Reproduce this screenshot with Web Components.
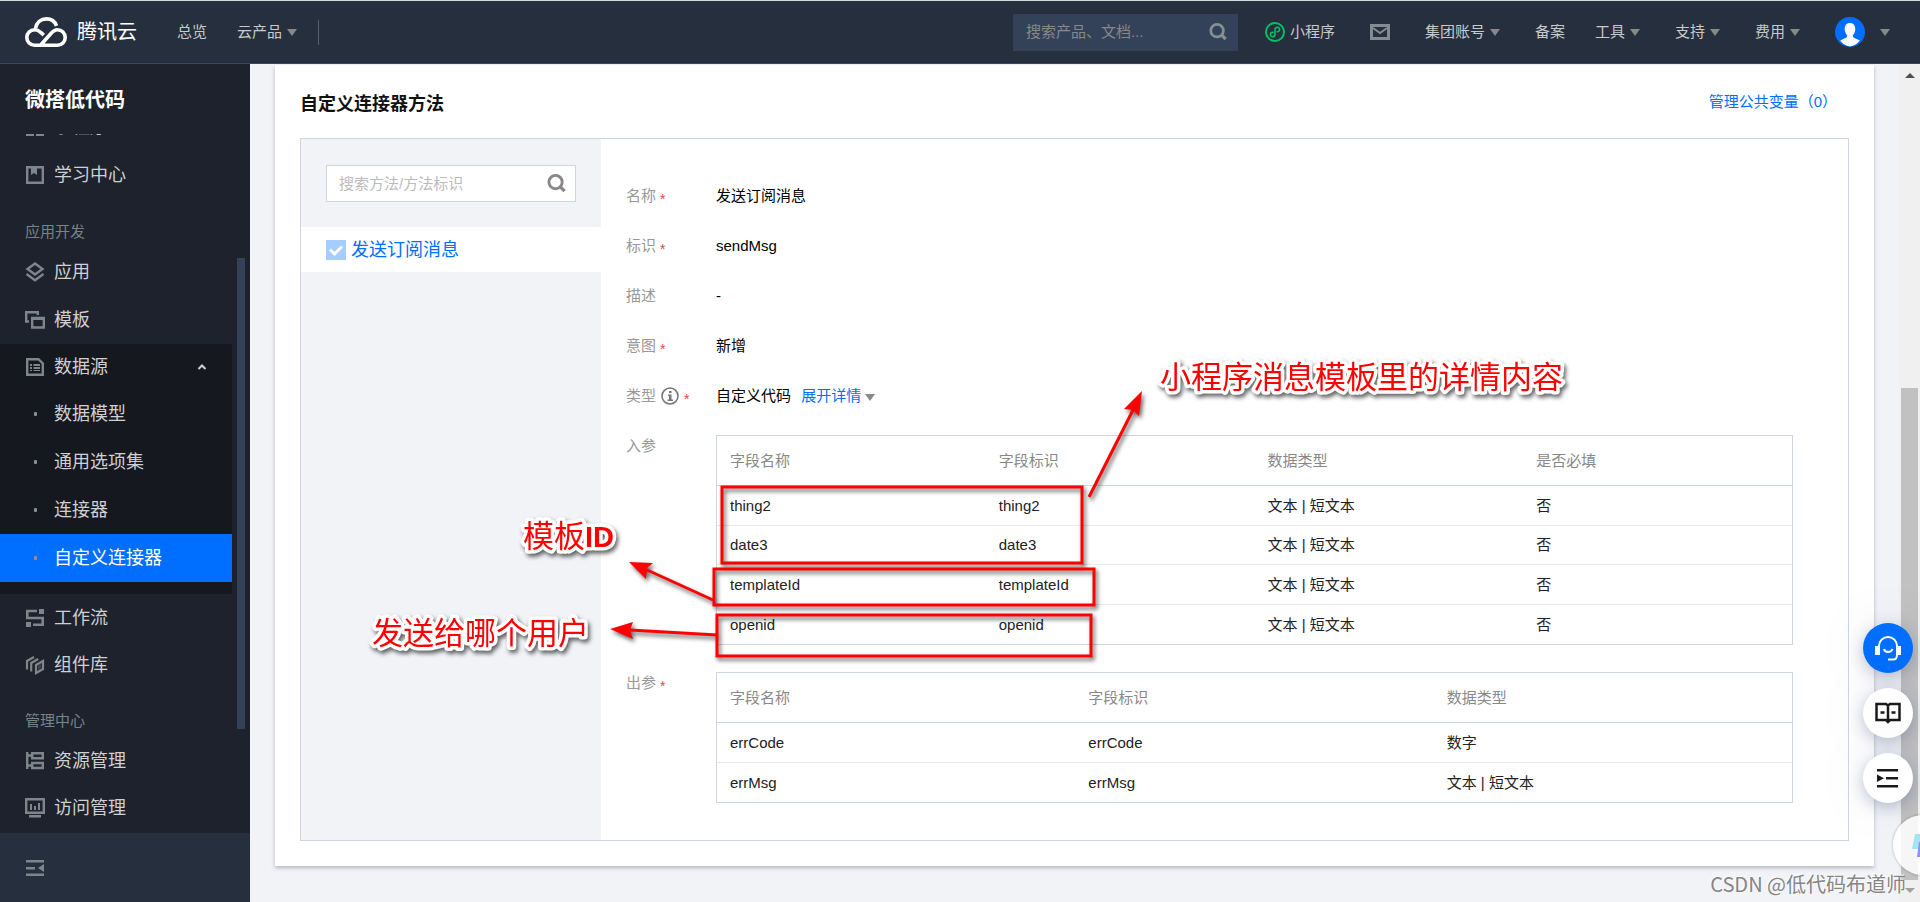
<!DOCTYPE html>
<html lang="zh-CN">
<head>
<meta charset="utf-8">
<meta name="viewport" content="width=device-width, initial-scale=1">
<title>微搭低代码 - 自定义连接器</title>
<style>
  html, body { height: 100%; margin: 0; }
  body {
    overflow: hidden;
    font: 15px/24px "Liberation Sans", "Noto Sans CJK SC", sans-serif;
    color: #000;
    background: #f2f3f7;
  }
</style>
</head>
<body>
<console-app></console-app>

<script>
const define = (name, html, setup) => {
  const tpl = document.createElement('template');
  tpl.innerHTML = html;
  customElements.define(name, class extends HTMLElement {
    constructor() {
      super();
      this.attachShadow({ mode: 'open' }).append(tpl.content.cloneNode(true));
    }
    connectedCallback() {
      if (setup && !this.ready) { this.ready = true; setup(this, this.shadowRoot); }
    }
  });
};

/* ---------- icons ---------- */
const ICONS = {
  book: '<path fill="none" stroke="currentColor" stroke-width="2.400" d="M2.200 2.200h15.600v15.600H2.200z"/><path fill="currentColor" d="M6 2h6v8l-3-2-3 2z"/>',
  grid: '<path fill="currentColor" d="M1 10h8v9H1zM11 10h8v9h-8z"/>',
  layers: '<path fill="none" stroke="currentColor" stroke-width="2.400" d="M10 1.500l7.500 5.500-7.500 5.500L2.500 7zM1.500 12l8.500 6.200 8.500-6.200"/>',
  template: '<path fill="none" stroke="currentColor" stroke-width="2.400" d="M4 11.500H1.200V2.200h11.600V5M7.200 8h11.600v9.500H7.200z"/><path fill="currentColor" d="M7 7h12v3H7z"/>',
  data: '<path fill="none" stroke="currentColor" stroke-width="2.400" d="M2.200 2.200h11.300l4.300 4.300v11.300H2.200z"/><path fill="currentColor" d="M5 7h2v2H5zM8.500 7H15v2H8.500zM5 10h2v2H5zM8.500 10H15v2H8.500zM5 13h2v1H5zM8.500 13H15v1H8.500z"/>',
  flow: '<path fill="none" stroke="currentColor" stroke-width="2.600" d="M12 3H2.300v7h15.400v6.700H8"/><path fill="currentColor" d="M14 1h5v5h-5zM1 14h5v5H1z"/>',
  parts: '<path fill="none" stroke="currentColor" stroke-width="2.200" d="M2 14.500V6l7-4M6.200 16.500V8l7-4M11 10l7-4v8l-7 4z"/><path fill="currentColor" d="M13 10.500l3-1.500v4l-3 2z" opacity=".35"/>',
  resource: '<path fill="none" stroke="currentColor" stroke-width="2.400" d="M2.200 1v17M2 4.500h4M2 14.500h4M7.200 2.200h10.600v5H7.200zM7.200 12h10.600v5H7.200z"/>',
  monitor: '<path fill="none" stroke="currentColor" stroke-width="2.400" d="M1.200 1.200h17.600v13.600H1.200z"/><path fill="currentColor" d="M5 6h2v6H5zM9 8h2v4H9zM13 5h2v7h-2zM4 17h12v2.400H4z"/>',
  fold: '<path fill="currentColor" d="M1 2h18v2.400H1zM1 9h9v2.400H1zM1 15.600h18V18H1zM19 6v8l-6-4z"/>',
  search: '<circle cx="9" cy="8.500" r="7" fill="none" stroke="currentColor" stroke-width="3"/><path stroke="currentColor" stroke-width="3.600" d="M13.500 13l5 5"/>',
  mail: '<path fill="none" stroke="currentColor" stroke-width="3" d="M1.500 3.500h17v13h-17z"/><path fill="none" stroke="currentColor" stroke-width="2" d="M3 6l7 5 7-5"/>',
  mini: '<circle cx="10" cy="10" r="9" fill="none" stroke="#07c160" stroke-width="2"/><path fill="none" stroke="#07c160" stroke-width="1.600" stroke-linecap="round" d="M8 10.200a2.300 2.300 0 1 0 2 2.300v-5a2.300 2.300 0 1 1 2.100 2.300"/>',
  info: '<circle cx="10" cy="10" r="8" fill="none" stroke="currentColor" stroke-width="1.600"/><path fill="currentColor" d="M9 5h2.500v2H9zM8 8.500h3.500v5H13V15H7.500v-1.500H9V10H8z"/>',
  up: '<path fill="none" stroke="currentColor" stroke-width="2" d="M6.500 12l3.500-3.500 3.500 3.500"/>'
};
customElements.define('ui-icon', class extends HTMLElement {
  connectedCallback() {
    if (this.shadowRoot) return;
    this.attachShadow({ mode: 'open' }).innerHTML =
      `<style>:host{display:inline-block;flex:none;width:20px;height:20px}svg{display:block;width:100%;height:100%}</style>
       <svg viewBox="0 0 20 20" aria-hidden="true">${ICONS[this.getAttribute('name')]}</svg>`;
  }
});

define('ui-caret', `
<style>
  :host { display: inline-block; flex: none; width: 0; height: 0;
    border: 5px solid transparent; border-top: 7px solid #888; border-bottom: 0; }
</style>`);

/* ---------- header ---------- */
define('nav-item', `
<style>
  :host { display: flex; align-items: center; padding-right: 5px; }
  :host([plain]) { padding-right: 0; }
  a { display: flex; align-items: center; gap: 5px; color: #c6cacc; text-decoration: none; white-space: nowrap; }
</style>
<a href="#"><slot></slot></a>`);

define('top-bar', `
<style>
  :host { display: flex; align-items: center; flex: none; height: 64px; box-sizing: border-box;
    padding: 0 30px 0 25px; background: #262f3e; border-top: 1px solid #cfdbdc; border-bottom: 1px solid #3a465a; }
  .logo { display: flex; align-items: center; gap: 10px; color: #fff; text-decoration: none; font-size: 20px; margin-right: 40px; }
  .logo svg { display: block; width: 42px; height: 30px; }
  .left, .right { display: flex; align-items: center; gap: 30px; }
  .left { border-right: 1px solid #59606c; padding-right: 16px; height: 25px; }
  .right { margin-left: auto; }
  form { display: flex; align-items: center; width: 225px; height: 37px; margin: 0 -3px 0 0;
    box-sizing: border-box; padding: 0 11px 0 13px; background: #344259; color: #878e96; }
  input { flex: 1; min-width: 0; border: 0; padding: 0; background: none; outline: 0; font: inherit; color: inherit; }
  input::placeholder { color: #888; opacity: 1; }
  form button { display: flex; border: 0; padding: 0; background: none; color: #878f94; }
  form ui-icon { width: 18px; height: 18px; }
  .mail { color: #848c93; }
  .avatar { display: flex; align-items: center; gap: 15px; border: 0; padding: 0; background: none; }
  .avatar svg { display: block; width: 30px; height: 30px; }
</style>
<a class="logo" href="#">
  <svg viewBox="0 0 42 30" fill="none" stroke="#fff" stroke-width="3.600" aria-hidden="true">
    <path d="M10.500 11.500C11.500 5.500 16 1.900 21.300 1.900c4.600 0 8.700 2.600 10.200 7"/>
    <path d="M15.500 28.200L25.500 17c2-2.400 4-4.300 7-4.300 4.300 0 7.700 3.400 7.700 7.700s-3.400 7.800-7.700 7.800H9.600c-4.300 0-7.800-3.500-7.800-7.800s3.500-7.700 7.800-7.700c2.800 0 4.600 1.300 6.400 2.900l2.800 2.500"/>
  </svg>
  <span>腾讯云</span>
</a>
<nav class="left">
  <nav-item plain>总览</nav-item>
  <nav-item>云产品 <ui-caret></ui-caret></nav-item>
</nav>
<div class="right">
  <form role="search">
    <input type="text" aria-label="搜索产品、文档" placeholder="搜索产品、文档...">
    <button type="button" aria-label="搜索"><ui-icon name="search"></ui-icon></button>
  </form>
  <nav-item><ui-icon name="mini"></ui-icon>小程序</nav-item>
  <nav-item aria-label="消息"><ui-icon class="mail" name="mail"></ui-icon></nav-item>
  <nav-item>集团账号 <ui-caret></ui-caret></nav-item>
  <nav-item plain>备案</nav-item>
  <nav-item>工具 <ui-caret></ui-caret></nav-item>
  <nav-item>支持 <ui-caret></ui-caret></nav-item>
  <nav-item>费用 <ui-caret></ui-caret></nav-item>
  <button class="avatar" type="button" aria-label="账号">
    <svg viewBox="0 0 30 30" aria-hidden="true"><circle cx="15" cy="15" r="15" fill="#006eff"/>
      <path fill="#fff" d="M15 6c3.600 0 5.300 2.700 5.300 6 0 2.600-1 4.700-2.300 6-.4 1.500.2 2.400 1.500 3l5.300 2.600A14.500 14.500 0 0 1 15 29.500a14.500 14.500 0 0 1-9.800-5.900l5.300-2.600c1.300-.6 1.900-1.500 1.500-3-1.300-1.300-2.300-3.400-2.300-6 0-3.300 1.700-6 5.300-6z"/></svg>
    <ui-caret></ui-caret>
  </button>
</div>`);

/* ---------- sidebar ---------- */
define('side-item', `
<style>
  :host { display: block; }
  a { display: flex; align-items: center; height: var(--item-height, 48px); padding: 0 20px 0 25px; gap: 9px;
    font-size: 18px; color: #cfd0d1; text-decoration: none; white-space: nowrap; }
  ui-icon { color: #7d868d; }
  .dot { flex: none; width: 20px; display: none; justify-content: center; }
  .dot::before { content: ""; width: 3px; height: 4px; border-radius: 1px; background: #8a8f96; }
  .up { display: none; margin-left: auto; color: #cfd0d1; }
  :host([sub]) .dot { display: flex; }
  :host([sub]) .icon { display: none; }
  :host([open]) .up { display: block; }
  :host([active]) a { background: #006eff; color: #fff; }
</style>
<a href="#"><span class="icon"></span><span class="dot"></span><slot></slot><ui-icon class="up" name="up"></ui-icon></a>`,
(el, root) => {
  const box = root.querySelector('.icon');
  if (el.hasAttribute('icon')) {
    const i = document.createElement('ui-icon');
    i.setAttribute('name', el.getAttribute('icon'));
    box.replaceWith(i);
  }
  if (!el.hasAttribute('sub')) root.querySelector('.dot').remove();
});

define('side-heading', `
<style>
  :host { display: block; padding: 16px 25px 0; height: 33px; line-height: 34px; color: #78838a; }
</style><slot></slot>`);

define('side-submenu', `
<style>
  :host { display: block; background: #16181f; padding-bottom: 12px; }
  ::slotted([open]) { --item-height: 46px; }
</style><slot></slot>`);

define('side-bar', `
<style>
  :host { display: flex; flex-direction: column; flex: none; width: 250px; background: #1e222d; }
  h1 { margin: 0; padding: 0 25px; height: 70px; line-height: 72px; font-size: 20px; color: #fff; flex: none; }
  .scroll { flex: 1; min-height: 0; display: flex; overflow: hidden; }
  nav { width: 232px; margin-top: -31px; }
  .compact { --item-height: 47px; }
  .track { width: 8px; margin-left: 5px; display: flex; flex-direction: column; }
  .track::before { content: ""; flex: 124; }
  .thumb { flex: 471; background: #344259; }
  .track::after { content: ""; flex: 104; }
  footer { flex: none; height: 69px; box-sizing: border-box; padding: 0 25px; display: flex; align-items: center; background: #262f3e; }
  footer button { border: 0; padding: 0; background: none; color: #7d868d; display: flex; }
</style>
<h1>微搭低代码</h1>
<div class="scroll">
  <nav>
    <side-item icon="grid">小程序</side-item>
    <side-item icon="book">学习中心</side-item>
    <side-heading>应用开发</side-heading>
    <side-item icon="layers">应用</side-item>
    <side-item icon="template">模板</side-item>
    <side-submenu>
      <side-item icon="data" open>数据源</side-item>
      <side-item sub>数据模型</side-item>
      <side-item sub>通用选项集</side-item>
      <side-item sub>连接器</side-item>
      <side-item sub active>自定义连接器</side-item>
    </side-submenu>
    <div class="compact">
      <side-item icon="flow">工作流</side-item>
      <side-item icon="parts">组件库</side-item>
      <side-heading>管理中心</side-heading>
      <side-item icon="resource">资源管理</side-item>
      <side-item icon="monitor">访问管理</side-item>
    </div>
  </nav>
  <div class="track"><div class="thumb"></div></div>
</div>
<footer><button type="button" aria-label="收起菜单"><ui-icon name="fold"></ui-icon></button></footer>`);

/* ---------- content ---------- */
define('method-list', `
<style>
  :host { display: block; flex: none; width: 300px; background: #f2f3f7; }
  .search { display: flex; align-items: center; height: 37px; box-sizing: border-box; margin: 26px 25px 25px;
    padding: 0 9px 0 12px; border: 1px solid #cfd5de; background: #fff; }
  .search input { flex: 1; min-width: 0; border: 0; padding: 0; outline: 0; background: none; font: inherit; }
  .search input::placeholder { color: #bbb; opacity: 1; }
  .search button { display: flex; border: 0; padding: 0; background: none; color: #888; }
  .search ui-icon { width: 19px; height: 19px; }
  label { display: flex; align-items: center; gap: 5px; height: 45px; padding: 0 25px; background: #fff; font-size: 18px; color: #006eff; }
  label input { appearance: none; width: 20px; height: 20px; margin: 0; flex: none; opacity: 1;
    background: #a6cdff url("data:image/svg+xml,%3Csvg xmlns='http://www.w3.org/2000/svg' viewBox='0 0 20 20'%3E%3Cpath d='M4 9.500l4.500 4.500L16 6.500' fill='none' stroke='white' stroke-width='3'/%3E%3C/svg%3E"); }
</style>
<div class="search">
  <input type="text" aria-label="搜索方法" placeholder="搜索方法/方法标识">
  <button type="button" aria-label="搜索"><ui-icon name="search"></ui-icon></button>
</div>
<label><input type="checkbox" checked disabled>发送订阅消息</label>`);

define('form-row', `
<style>
  :host { display: flex; line-height: 30px; }
  .label { flex: none; width: 90px; display: flex; align-items: center; gap: 4px; height: 30px; color: #999; }
  .star { display: none; color: #e54545; font-size: 14px; padding-top: 5px; }
  :host([required]) .star { display: block; }
  ui-icon { display: none; color: #777; }
  :host([info]) ui-icon { display: block; }
  .value { flex: 1; min-width: 0; }
</style>
<div class="label"><span class="text"></span><ui-icon name="info"></ui-icon><span class="star">*</span></div>
<div class="value"><slot></slot></div>`,
(el, root) => { root.querySelector('.text').textContent = el.getAttribute('label'); });

define('field-table', `
<style>
  :host { display: block; margin: 4px 0 3px; }
  table { width: 100%; table-layout: fixed; border-collapse: separate; border-spacing: 0; border: 1px solid #cfd5de; line-height: 24px; }
  th, td { box-sizing: border-box; padding: 0 13px; text-align: left; font-weight: 400; }
  th { height: 50px; color: #888; border-bottom: 1px solid #cfd5de; }
  td { height: 40px; color: #222; border-bottom: 1px solid #e5e8ed; }
  tr:nth-child(even) td { height: 39px; }
  tr:last-child td { border-bottom: 0; }
</style>
<table><thead><tr></tr></thead><tbody></tbody></table>`,
(el, root) => {
  const cells = (tr, tag, list) => list.forEach(t => {
    const c = document.createElement(tag);
    if (tag === 'th') c.scope = 'col';
    c.textContent = t; tr.append(c);
  });
  cells(root.querySelector('thead tr'), 'th', el.getAttribute('columns').split(','));
  el.getAttribute('rows').split(';').forEach(r =>
    cells(root.querySelector('tbody').insertRow(), 'td', r.split(',')));
});

define('method-detail', `
<style>
  :host { display: flex; flex-direction: column; gap: 20px; flex: 1; min-width: 0; padding: 42px 55px 34px 25px; }
  a { color: #006eff; text-decoration: none; margin-left: 6px; }
</style>
<form-row label="名称" required>发送订阅消息</form-row>
<form-row label="标识" required>sendMsg</form-row>
<form-row label="描述">-</form-row>
<form-row label="意图" required>新增</form-row>
<form-row label="类型" info required>自定义代码 <a href="#">展开详情 <ui-caret></ui-caret></a></form-row>
<form-row label="入参"><field-table columns="字段名称,字段标识,数据类型,是否必填"
  rows="thing2,thing2,文本 | 短文本,否;date3,date3,文本 | 短文本,否;templateId,templateId,文本 | 短文本,否;openid,openid,文本 | 短文本,否"></field-table></form-row>
<form-row label="出参" required><field-table columns="字段名称,字段标识,数据类型"
  rows="errCode,errCode,数字;errMsg,errMsg,文本 | 短文本"></field-table></form-row>`);

define('connector-card', `
<style>
  :host { display: block; padding: 0 25px 25px; background: #fff; box-shadow: 0 2px 4px rgba(54,58,80,.32); }
  header { display: flex; justify-content: space-between; padding: 25px 12px 20px 0; }
  h2 { margin: 0; font-size: 18px; line-height: 28px; color: #111; }
  a { color: #006eff; text-decoration: none; }
  .box { display: flex; border: 1px solid #cfd5de; }
</style>
<header><h2>自定义连接器方法</h2><a href="#">管理公共变量（0）</a></header>
<div class="box"><method-list></method-list><method-detail></method-detail></div>`);

/* Hand-drawn notes that lie over the page */
define('note-layer', `
<style>
  :host { position: absolute; top: 0; left: 0; pointer-events: none; }
  svg { display: block; overflow: visible; }
  g { filter: drop-shadow(2px 3px 2px rgba(0,0,0,.6)); }
  text { font: 400 31px "Liberation Sans", "Noto Sans CJK SC", sans-serif; fill: #f00; stroke: #fff; stroke-width: 7px; stroke-linejoin: round; paint-order: stroke; }
  .bold { font-weight: 700; font-size: 29px; }
  rect { fill: none; stroke: #f00; stroke-width: 3px; }
  line { stroke: #f00; stroke-width: 3px; }
  .head { fill: #f00; }
</style>
<svg width="1649" height="838" viewBox="250 64 1649 838">
  <g>
    <rect x="722" y="487" width="360" height="76"/>
    <rect x="714" y="569" width="380" height="36"/>
    <rect x="717" y="615" width="374" height="41"/>
    <line x1="1089" y1="497" x2="1134" y2="408"/><path class="head" d="M1142 391l-3 25-6-6-9-1z"/>
    <line x1="713" y1="600" x2="645" y2="569"/><path class="head" d="M629 562l24 1-6 5-1 11z"/>
    <line x1="717" y1="635" x2="630" y2="630"/><path class="head" d="M610 629l23-7-3 8 3 9z"/>
  </g>
  <g>
    <text x="1160" y="388">小程序消息模板里的详情内容</text>
    <text x="523" y="547">模板<tspan class="bold">ID</tspan></text>
    <text x="372" y="644">发送给哪个用户</text>
  </g>
</svg>`);

define('page-scrollbar', `
<style>
  :host { display: flex; flex-direction: column; align-items: center; flex: none; width: 21px; background: #f0f0f0; }
  i { flex: none; width: 0; height: 0; border: 5px solid transparent; }
  .up { border-bottom-color: #505050; border-top: 0; margin: 9px 0; }
  .down { border-top-color: #a0a0a0; border-bottom: 0; margin: 8px 0 9px; }
  .gap { flex: 302; }
  .thumb { flex: 493; width: 17px; background: #c1c1c1; }
</style>
<i class="up"></i><span class="gap"></span><span class="thumb"></span><i class="down"></i>`);

define('float-tools', `
<style>
  :host { position: absolute; right: 7px; bottom: 99px; display: flex; flex-direction: column; gap: 15px; }
  button { display: flex; align-items: center; justify-content: center; width: 50px; height: 50px; border: 0; padding: 0;
    border-radius: 50%; background: #fff; color: #1a1a1a; box-shadow: 0 4px 16px rgba(45,60,110,.3), 0 0 60px rgba(45,60,110,.08); }
  .blue { background: #006eff; color: #fff; }
  svg { width: 26px; height: 26px; }
  .peek { position: absolute; top: 192px; left: 30px; width: 60px; height: 60px; box-sizing: border-box; justify-content: flex-start;
    padding-left: 17px; background: rgba(255,255,255,.85); box-shadow: 0 0 3px rgba(0,0,0,.3); }
</style>
<button class="blue" type="button" aria-label="客服">
  <svg viewBox="0 0 26 26" fill="none" stroke="currentColor" stroke-width="2"><path d="M4 12v-1a9 9 0 0 1 18 0v9c0 3-1 4.500-4 4.500h-5"/><path d="M9 14c1 4 7 4 8.500 0"/><path fill="currentColor" stroke="none" d="M0 11h5v9H0zM21 11h5v9h-5z"/></svg>
</button>
<button type="button" aria-label="文档">
  <svg viewBox="0 0 26 26" fill="none" stroke="currentColor" stroke-width="2.500"><path d="M13 5.500L11 4H1.500v16H11l2 2 2-2h9.500V4H15zM13 5v17M5.500 12.500h4M16.500 12.500h4"/></svg>
</button>
<button type="button" aria-label="目录">
  <svg viewBox="0 0 26 26" fill="currentColor"><path d="M2 4h21v2.500H2zM11 12h12v2.500H11zM2 20h21v2.500H2zM2 9.500v7.500l7-3.700z"/></svg>
</button>
<button class="peek" type="button" aria-label="助手">
  <svg viewBox="0 0 26 26"><path fill="#a3e4f5" d="M5 2h16l-4 15H2z"/><path fill="#8d90f5" d="M9 10h14l-4 15H7z"/></svg>
</button>`);

define('water-mark', `
<style>
  :host { position: absolute; right: 14px; bottom: 4px; font: 20px/28px "Noto Sans", "Noto Sans CJK SC", sans-serif;
    font-family: "Noto Sans CJK SC", sans-serif; color: #858585; text-shadow: -1px -1px 0 #fff; white-space: nowrap; pointer-events: none; }
</style><slot></slot>`);

define('console-app', `
<style>
  :host { position: relative; display: flex; flex-direction: column; height: 100vh; overflow: hidden; }
  .body { flex: 1; min-height: 0; display: flex; }
  main { position: relative; flex: 1; min-width: 0; overflow: hidden; box-sizing: border-box; padding: 1px 25px 36px; }
</style>
<top-bar></top-bar>
<div class="body">
  <side-bar></side-bar>
  <main><connector-card></connector-card><note-layer></note-layer></main>
  <page-scrollbar></page-scrollbar>
</div>
<float-tools></float-tools>
<water-mark>CSDN @低代码布道师</water-mark>`);
</script>
</body>
</html>
